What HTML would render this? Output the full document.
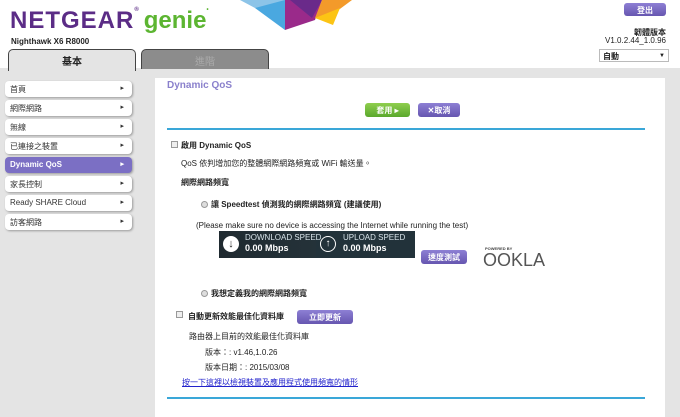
<!DOCTYPE html>
<html><head><meta charset="utf-8"><style>
*{margin:0;padding:0;box-sizing:border-box}
body{width:680px;height:417px;overflow:hidden;background:#fff;font-family:"Liberation Sans","Noto Sans CJK TC",sans-serif;font-size:8px;color:#222;position:relative}
.a{position:absolute}
.side{left:5px;width:127px;height:16px;border-radius:4px;background:#fff;box-shadow:1px 1px 2px #999;font-size:8px;padding:3px 0 0 5px;color:#333}
.side:after{content:"▸";position:absolute;right:8px;top:3px;font-size:7px}
.btn{border-radius:3px;color:#fff;font-size:8px;text-align:center;font-weight:bold}
.pur{background:linear-gradient(#8d7fd4,#6656b0)}
</style></head><body>
<svg class="a" style="left:0;top:0" width="680" height="40">
<polygon points="240,0 285,0 285,10 255,8" fill="#8cc4e8"/>
<polygon points="255,8 285,0 285,30" fill="#4aa8e0"/>
<polygon points="285,0 322,0 315,20 285,30" fill="#9a2a8a"/>
<polygon points="290,0 322,0 312,18" fill="#6a2a8a"/>
<polygon points="322,0 352,0 325,20 315,18" fill="#f39a2a"/>
<polygon points="315,18 340,8 333,25" fill="#fcc414"/>
</svg>
<div class="a" style="left:10px;top:7px;font-size:24px;font-weight:bold;color:#5b2c86;letter-spacing:1px">NETGEAR<span style="font-size:6px;vertical-align:top">®</span><span style="color:#5cb531;letter-spacing:0;margin-left:4px">genie</span><span style="color:#5cb531;font-size:6px;vertical-align:top">•</span></div>
<div class="a" style="left:11px;top:37px;font-size:8px;font-weight:bold">Nighthawk X6 R8000</div>
<div class="a" style="left:0;top:68px;width:680px;height:349px;background:#e4e4e4"></div>
<div class="a" style="left:8px;top:49px;width:128px;height:22px;background:#e4e4e4;border:1px solid #444;border-bottom:none;border-radius:5px 5px 0 0;text-align:center;font-size:10px;font-weight:bold;padding-top:3px">基本</div>
<div class="a" style="left:141px;top:49px;width:128px;height:20px;background:#8c8c8c;border:1px solid #444;border-bottom:none;border-radius:5px 5px 0 0;text-align:center;font-size:10px;color:#aaa;padding-top:3px">進階</div>
<div class="a btn pur" style="left:624px;top:3px;width:42px;height:13px;padding-top:2px">登出</div>
<div class="a" style="right:14px;top:27px;font-size:8px;font-weight:bold">韌體版本</div>
<div class="a" style="right:14px;top:36px;font-size:8px">V1.0.2.44_1.0.96</div>
<div class="a" style="left:599px;top:49px;width:70px;height:13px;background:#fff;border:1px solid #bbb;font-size:8px;font-weight:bold;padding:1px 3px">自動<span style="float:right;font-size:6px;padding-top:2px">▼</span></div>
<div class="a" style="left:155px;top:78px;width:510px;height:339px;background:#fff"></div>
<div class="a" style="left:167px;top:80px;font-size:10px;font-weight:bold;color:#8a80cc">Dynamic QoS</div>
<div class="a side" style="top:81px">首頁</div>
<div class="a side" style="top:100px">網際網路</div>
<div class="a side" style="top:119px">無線</div>
<div class="a side" style="top:138px">已連接之裝置</div>
<div class="a side" style="top:157px;background:#7b6fc4;color:#fff;font-weight:bold">Dynamic QoS</div>
<div class="a side" style="top:176px">家長控制</div>
<div class="a side" style="top:195px">Ready SHARE Cloud</div>
<div class="a side" style="top:214px">訪客網路</div>
<div class="a btn" style="left:365px;top:103px;width:45px;height:14px;padding-top:2px;background:linear-gradient(#8fce4e,#5aa82c)">套用 ▸</div>
<div class="a btn pur" style="left:418px;top:103px;width:42px;height:14px;padding-top:2px">✕取消</div>
<div class="a" style="left:167px;top:128px;width:478px;height:2px;background:#3aa7d8"></div>
<div class="a" style="left:167px;top:397px;width:478px;height:2px;background:#3aa7d8"></div>
<div class="a" style="left:171px;top:141px;width:7px;height:7px;border:1px solid #999;background:#eee"></div>
<div class="a" style="left:181px;top:140px;font-weight:bold">啟用 Dynamic QoS</div>
<div class="a" style="left:181px;top:158px">QoS 依判增加您的整體網際網路頻寬或 WiFi 輸送量。</div>
<div class="a" style="left:181px;top:177px;font-weight:bold">網際網路頻寬</div>
<div class="a" style="left:201px;top:201px;width:7px;height:7px;border-radius:50%;border:1px solid #999;background:#ddd"></div>
<div class="a" style="left:211px;top:199px;font-weight:bold">讓 Speedtest 偵測我的網際網路頻寬 (建議使用)</div>
<div class="a" style="left:196px;top:221px">(Please make sure no device is accessing the Internet while running the test)</div>
<div class="a" style="left:219px;top:231px;width:196px;height:27px;background:linear-gradient(90deg,#1f2a30,#2a3a42)"></div>
<div class="a" style="left:316px;top:231px;width:99px;height:27px;background:#22323a"></div>
<div class="a" style="left:223px;top:236px;width:16px;height:16px;border-radius:50%;background:#fff;color:#222;font-size:11px;font-weight:bold;text-align:center;line-height:16px">↓</div>
<div class="a" style="left:320px;top:236px;width:16px;height:16px;border-radius:50%;border:1.5px solid #fff;color:#fff;font-size:10px;font-weight:bold;text-align:center;line-height:13px">↑</div>
<div class="a" style="left:245px;top:233px;color:#d8e4ea;font-size:8px">DOWNLOAD SPEED</div>
<div class="a" style="left:245px;top:243px;color:#fff;font-size:9px;font-weight:bold">0.00 Mbps</div>
<div class="a" style="left:343px;top:233px;color:#d8e4ea;font-size:8px">UPLOAD SPEED</div>
<div class="a" style="left:343px;top:243px;color:#fff;font-size:9px;font-weight:bold">0.00 Mbps</div>
<div class="a btn pur" style="left:421px;top:250px;width:46px;height:14px;padding-top:2px">速度測試</div>
<div class="a" style="left:485px;top:246px;font-size:4px;font-weight:bold;color:#444">POWERED BY</div>
<div class="a" style="left:483px;top:250px;font-size:18px;color:#555;letter-spacing:0px">OOKLA</div>
<div class="a" style="left:201px;top:290px;width:7px;height:7px;border-radius:50%;border:1px solid #999;background:#ddd"></div>
<div class="a" style="left:211px;top:288px;font-weight:bold">我想定義我的網際網路頻寬</div>
<div class="a" style="left:176px;top:311px;width:7px;height:7px;border:1px solid #999;background:#eee"></div>
<div class="a" style="left:188px;top:311px;font-weight:bold">自動更新效能最佳化資料庫</div>
<div class="a btn pur" style="left:297px;top:310px;width:56px;height:14px;padding-top:2px">立即更新</div>
<div class="a" style="left:189px;top:331px">路由器上目前的效能最佳化資料庫</div>
<div class="a" style="left:205px;top:347px">版本：: v1.46,1.0.26</div>
<div class="a" style="left:205px;top:362px">版本日期：: 2015/03/08</div>
<div class="a" style="left:182px;top:377px;color:#2222cc;text-decoration:underline">按一下這裡以檢視裝置及應用程式使用頻寬的情形</div>
</body></html>
